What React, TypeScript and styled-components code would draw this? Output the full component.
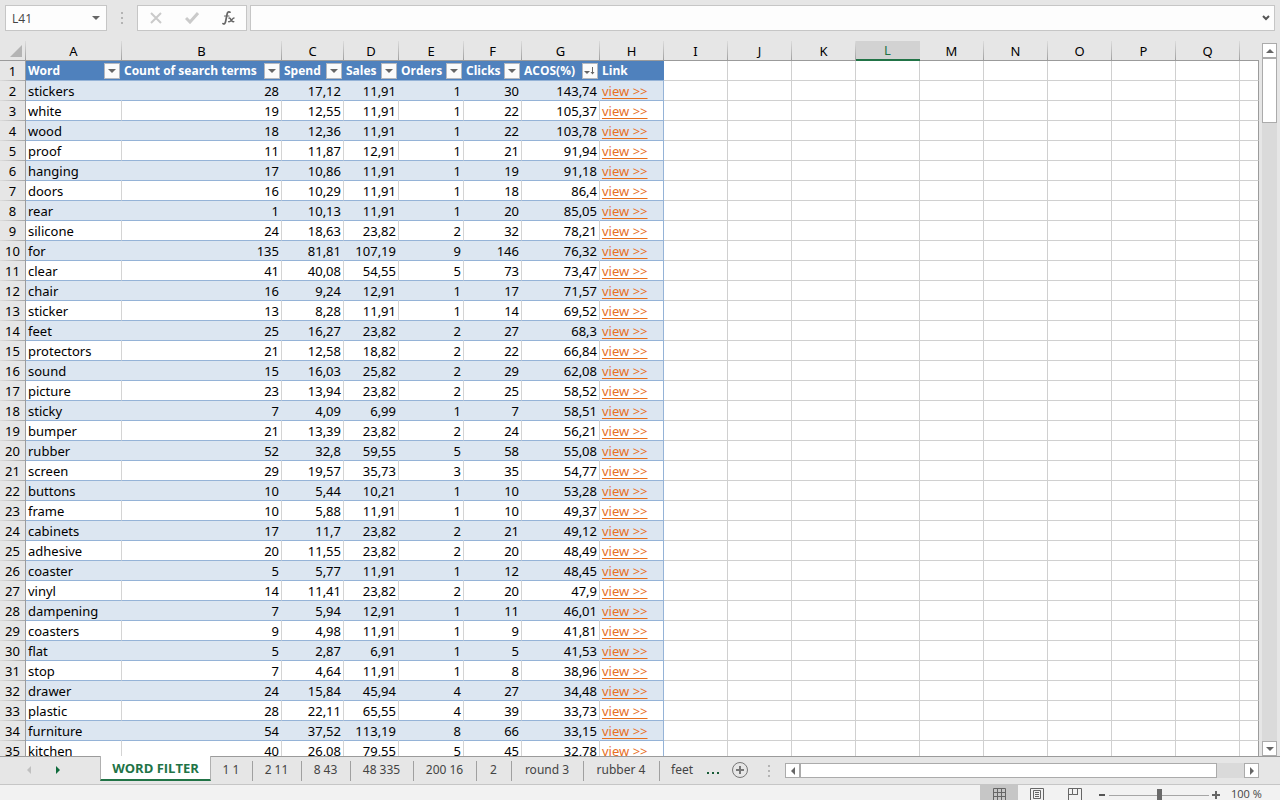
import React from "react";
import styled, { createGlobalStyle, css } from "styled-components";

const GlobalStyle = createGlobalStyle`
  *, *::before, *::after { box-sizing: border-box; }
  body { margin: 0; background: #e6e6e6; }
  button, input { font: inherit; color: inherit; }
`;

const uiFont = `"Open Sans", "Noto Sans", sans-serif`;
const green = "#217346";

const Workbook = styled.div`
  display: flex;
  flex-direction: column;
  height: 100vh;
  overflow: hidden;
  background: #e6e6e6;
  font-family: ${uiFont};
  font-size: 12px;
  color: #444;
`;

/* ---------- formula bar ---------- */

const FormulaBar = styled.header`
  display: flex;
  flex: none;
  height: 41px;
  padding: 5px 5px 10px;
`;

const Field = styled.div<{ $grow?: boolean }>`
  display: flex;
  align-items: center;
  border: 1px solid #c6c6c6;
  background: #fdfdfd;
  ${(p) => (p.$grow ? css`flex: 1; min-width: 0;` : css`flex: none; width: 102px;`)}
`;

const FieldInput = styled.input`
  flex: 1;
  min-width: 0;
  height: 22px;
  padding: 0 6px;
  border: 0;
  outline: 0;
  background: transparent;
`;

const PlainButton = styled.button<{ $w: number }>`
  display: flex;
  flex: none;
  align-items: center;
  justify-content: center;
  width: ${(p) => p.$w}px;
  height: 24px;
  padding: 0;
  border: 0;
  background: transparent;
`;

const GripBox = styled.div<{ $w: number }>`
  display: flex;
  flex: none;
  align-items: center;
  justify-content: center;
  width: ${(p) => p.$w}px;
`;

const Grip = ({ w }: { w: number }) => (
  <GripBox $w={w}>
    <svg width="2" height="12" fill="#b4b4b4">
      <rect width="2" height="2" />
      <rect y="5" width="2" height="2" />
      <rect y="10" width="2" height="2" />
    </svg>
  </GripBox>
);

const FormulaTools = styled.div`
  display: flex;
  flex: none;
  width: 110px;
  margin-right: 3px;
  border: 1px solid #c6c6c6;
  background: #fdfdfd;
`;

/* ---------- grid ---------- */

const Main = styled.main`
  display: flex;
  flex: 1;
  min-height: 0;
`;

const SheetPane = styled.div`
  flex: 1;
  min-width: 0;
  overflow: hidden;
`;

const SheetTable = styled.table`
  width: 100%;
  table-layout: fixed;
  border-collapse: separate;
  border-spacing: 0;
  font-family: "Noto Sans", sans-serif;
  font-size: 13px;
  line-height: 18px;
  color: #000;
`;

const Col = styled.col<{ $w?: number }>`
  width: ${(p) => (p.$w ? `${p.$w}px` : "auto")};
`;

const ColumnLetter = styled.th<{ $selected?: boolean; $last?: boolean }>`
  height: 20px;
  padding: 0 1px 0 0;
  font-weight: 400;
  border-bottom: 1px solid #9b9b9b;
  background: ${(p) =>
    p.$last ? "#e6e6e6" : "linear-gradient(#dcdcdc, #a0a0a0) right / 1px 100% no-repeat, #e6e6e6"};
  ${(p) =>
    p.$selected &&
    css`
      line-height: 17px;
      color: ${green};
      background: #d2d2d2;
      border-bottom: 2px solid ${green};
    `}
`;

const Corner = styled.td`
  height: 20px;
  padding: 0;
  border-bottom: 1px solid #9b9b9b;
  background: linear-gradient(#dcdcdc, #a0a0a0) right / 1px 100% no-repeat;
`;

const CornerMark = styled.svg`
  display: block;
  margin: 0 0 0 10px;
`;

const RowNumber = styled.th`
  height: 20px;
  padding: 0;
  font-weight: 400;
  text-align: center;
  border-right: 1px solid #9b9b9b;
  background: linear-gradient(90deg, #dcdcdc, #a8a8a8) bottom / 100% 1px no-repeat, #e6e6e6;
`;

const FieldHead = styled.th`
  height: 20px;
  padding: 0 0 0 2px;
  text-align: left;
  color: #fff;
  background: #4f81bd;
  border-bottom: 1px solid #95b3d7;
`;

const FieldHeadInner = styled.div`
  display: flex;
  align-items: center;
  justify-content: space-between;
  height: 19px;
  padding-right: 2px;
  font-family: ${uiFont};
  font-size: 12px;
  font-weight: 700;
  line-height: 20px;
  white-space: nowrap;
`;

const FilterButton = styled.button`
  display: flex;
  flex: none;
  align-items: center;
  justify-content: center;
  width: 16px;
  height: 16px;
  padding: 0;
  border: 1px solid #b4b8bf;
  background: #fbfbfb;
`;

const DataCell = styled.td<{ $banded: boolean; $num?: boolean; $end?: boolean }>`
  height: 20px;
  padding: 0 2px;
  white-space: nowrap;
  text-align: ${(p) => (p.$num ? "right" : "left")};
  background: ${(p) => (p.$banded ? "#dce6f1" : "#fff")};
  border-bottom: 1px solid #95b3d7;
  border-right: 1px solid ${(p) => (p.$end ? "#95b3d7" : p.$banded ? "#dce6f1" : "#d4d4d4")};
`;

const EmptyCell = styled.td<{ $last?: boolean }>`
  height: 20px;
  padding: 0;
  background: #fff;
  border-bottom: 1px solid #d0d0d0;
  border-right: 1px solid ${(p) => (p.$last ? "#9b9b9b" : "#d0d0d0")};
`;

const ViewLink = styled.a`
  color: #e8701f;
  text-decoration: underline;
  text-underline-offset: 2px;
`;

/* ---------- scroll bars ---------- */

const VScroll = styled.div`
  display: flex;
  flex: none;
  flex-direction: column;
  width: 21px;
  padding: 2px 3px 0;
`;

const ScrollButton = styled.button`
  display: flex;
  flex: none;
  align-items: center;
  justify-content: center;
  width: 15px;
  height: 15px;
  padding: 0;
  border: 1px solid #ababab;
  background: #fff;
`;

const Track = styled.div<{ $vertical?: boolean }>`
  flex: 1;
  min-width: 0;
  width: ${(p) => (p.$vertical ? "15px" : "auto")};
  height: ${(p) => (p.$vertical ? "auto" : "15px")};
  background: #dadada;
`;

const Thumb = styled.div<{ $vertical?: boolean }>`
  width: ${(p) => (p.$vertical ? "15px" : "94%")};
  height: ${(p) => (p.$vertical ? "65px" : "15px")};
  border: 1px solid #ababab;
  background: #fff;
`;

/* ---------- sheet tabs ---------- */

const TabBar = styled.nav`
  display: flex;
  flex: none;
  height: 28px;
  border-top: 1px solid #9b9b9b;
`;

const TabArrows = styled.div`
  display: flex;
  flex: none;
  width: 100px;
  padding-left: 15px;
`;

const Tab = styled.button<{ $w: number; $active?: boolean; $plain?: boolean }>`
  flex: none;
  width: ${(p) => p.$w}px;
  height: 26px;
  padding: 0 2px 0 0;
  border: 0;
  line-height: 26px;
  font-family: "Noto Sans", sans-serif;
  white-space: nowrap;
  background: ${(p) =>
    p.$plain ? "transparent" : "linear-gradient(#a0a0a0, #a0a0a0) right 4px / 1px 20px no-repeat"};
  ${(p) =>
    p.$active &&
    css`
      height: 25px;
      margin-top: -1px;
      padding: 2px 0 0;
      line-height: 21px;
      font-size: 13px;
      font-family: ${uiFont};
      font-weight: 700;
      color: ${green};
      background: #fff;
      border: 1px solid #b0b0b0;
      border-top: 0;
      border-bottom: 2px solid ${green};
    `}
`;

const TabSlot = styled.button<{ $w: number }>`
  display: flex;
  flex: none;
  align-items: center;
  justify-content: center;
  width: ${(p) => p.$w}px;
  height: 26px;
  padding: 0;
  border: 0;
  background: transparent;
`;

const HScroll = styled.div`
  display: flex;
  flex: 1;
  min-width: 0;
  padding: 6px 21px 0 8px;
`;

/* ---------- status bar ---------- */

const StatusBar = styled.footer`
  display: flex;
  flex: none;
  justify-content: flex-end;
  height: 16px;
  overflow: hidden;
  border-top: 1px solid #c6c6c6;
  background: #f2f2f2;
`;

const ViewButton = styled.button<{ $active?: boolean }>`
  display: flex;
  flex: none;
  justify-content: center;
  width: 38px;
  height: 22px;
  padding: 3px 0 0;
  border: 0;
  background: ${(p) => (p.$active ? "#c6c6c6" : "transparent")};
`;

const ZoomButton = styled.button<{ $w: number }>`
  display: flex;
  flex: none;
  align-items: center;
  justify-content: center;
  width: ${(p) => p.$w}px;
  height: 20px;
  padding: 0;
  border: 0;
  background: transparent;
`;

const ZoomSlider = styled.input`
  flex: none;
  width: 100px;
  height: 20px;
  margin: 0;
  appearance: none;
  background: linear-gradient(#a6a6a6, #a6a6a6) center / 100% 1px no-repeat;

  &::-webkit-slider-thumb {
    appearance: none;
    width: 5px;
    height: 12px;
    background: #6a6a6a;
  }
`;

const ZoomValue = styled.span`
  flex: none;
  width: 58px;
  padding-left: 9px;
  line-height: 18px;
  font-size: 11px;
  white-space: nowrap;
`;

/* ---------- data ---------- */

const fields: [string, "menu" | "sorted" | null][] = [
  ["Word", "menu"],
  ["Count of search terms", "menu"],
  ["Spend", "menu"],
  ["Sales", "menu"],
  ["Orders", "menu"],
  ["Clicks", "menu"],
  ["ACOS(%)", "sorted"],
  ["Link", null],
];

const widths = [96, 160, 62, 55, 65, 58, 78, 64, 64, 64, 64, 64, 64, 64, 64, 64, 64];
const letters = "ABCDEFGHIJKLMNOPQ".split("");

const rows = `stickers 28 17,12 11,91 1 30 143,74
white 19 12,55 11,91 1 22 105,37
wood 18 12,36 11,91 1 22 103,78
proof 11 11,87 12,91 1 21 91,94
hanging 17 10,86 11,91 1 19 91,18
doors 16 10,29 11,91 1 18 86,4
rear 1 10,13 11,91 1 20 85,05
silicone 24 18,63 23,82 2 32 78,21
for 135 81,81 107,19 9 146 76,32
clear 41 40,08 54,55 5 73 73,47
chair 16 9,24 12,91 1 17 71,57
sticker 13 8,28 11,91 1 14 69,52
feet 25 16,27 23,82 2 27 68,3
protectors 21 12,58 18,82 2 22 66,84
sound 15 16,03 25,82 2 29 62,08
picture 23 13,94 23,82 2 25 58,52
sticky 7 4,09 6,99 1 7 58,51
bumper 21 13,39 23,82 2 24 56,21
rubber 52 32,8 59,55 5 58 55,08
screen 29 19,57 35,73 3 35 54,77
buttons 10 5,44 10,21 1 10 53,28
frame 10 5,88 11,91 1 10 49,37
cabinets 17 11,7 23,82 2 21 49,12
adhesive 20 11,55 23,82 2 20 48,49
coaster 5 5,77 11,91 1 12 48,45
vinyl 14 11,41 23,82 2 20 47,9
dampening 7 5,94 12,91 1 11 46,01
coasters 9 4,98 11,91 1 9 41,81
flat 5 2,87 6,91 1 5 41,53
stop 7 4,64 11,91 1 8 38,96
drawer 24 15,84 45,94 4 27 34,48
plastic 28 22,11 65,55 4 39 33,73
furniture 54 37,52 113,19 8 66 33,15
kitchen 40 26,08 79,55 5 45 32,78`
  .split("\n")
  .map((line) => line.split(" "));

const tabs: [string, number][] = [
  ["1 1", 42],
  ["2 11", 49],
  ["8 43", 49],
  ["48 335", 63],
  ["200 16", 63],
  ["2", 35],
  ["round 3", 72],
  ["rubber 4", 76],
];

const Triangle = ({ dir, color = "#666" }: { dir: "up" | "down" | "left" | "right"; color?: string }) => {
  const shapes = {
    up: "M0 6L4 2L8 6Z",
    down: "M0 2H8L4 6Z",
    left: "M6 0V8L2 4Z",
    right: "M2 0V8L6 4Z",
  };
  return (
    <svg width="8" height="8" viewBox="0 0 8 8">
      <path d={shapes[dir]} fill={color} />
    </svg>
  );
};

const blanks = letters.slice(8);

const Blanks = () => (
  <>
    {blanks.map((l) => (
      <EmptyCell key={l} />
    ))}
    <EmptyCell $last />
  </>
);

export default function App() {
  return (
    <Workbook>
      <GlobalStyle />
      <FormulaBar>
        <Field>
          <FieldInput aria-label="Name box" defaultValue="L41" />
          <PlainButton $w={20} aria-label="Open name list">
            <Triangle dir="down" />
          </PlainButton>
        </Field>
        <Grip w={30} />
        <FormulaTools>
          <PlainButton $w={36} aria-label="Cancel">
            <svg width="12" height="12" viewBox="0 0 12 12" stroke="#cacaca" strokeWidth="2">
              <path d="M1 1L11 11M11 1L1 11" />
            </svg>
          </PlainButton>
          <PlainButton $w={36} aria-label="Enter">
            <svg width="14" height="12" viewBox="0 0 14 12" fill="none" stroke="#cacaca" strokeWidth="3">
              <path d="M1 6L5 10L13 1" />
            </svg>
          </PlainButton>
          <PlainButton $w={36} aria-label="Insert function">
            <svg width="13" height="14" viewBox="0 0 13 14" fill="none" stroke="#666" strokeLinecap="round">
              <path d="M8 1.2C6.300 .2 5.400 1.500 5 3.500L3.600 10.500C3.200 12.600 2.300 13.500 1 12.600" strokeWidth="1.700" />
              <path d="M2.500 5H7" strokeWidth="1.200" />
              <path d="M7 7.200C8.800 6 9 11.600 11.800 10.600M12 7C10.500 7 8.600 11.300 6.600 10.700" strokeWidth="1.400" />
            </svg>
          </PlainButton>
        </FormulaTools>
        <Field $grow>
          <FieldInput aria-label="Formula" defaultValue="" />
          <PlainButton $w={16} aria-label="Expand formula bar">
            <svg width="8" height="6" viewBox="0 0 8 6" fill="none" stroke="#555" strokeWidth="2">
              <path d="M1 1L4 4L7 1" />
            </svg>
          </PlainButton>
        </Field>
      </FormulaBar>

      <Main>
        <SheetPane>
          <SheetTable>
            <colgroup>
              <Col $w={26} />
              {widths.map((w, i) => (
                <Col key={i} $w={w} />
              ))}
              <Col />
            </colgroup>
            <thead>
              <tr>
                <Corner>
                  <CornerMark width="12" height="12" viewBox="0 0 12 12">
                    <path d="M12 0V12H0Z" fill="#b4b4b4" />
                  </CornerMark>
                </Corner>
                {letters.map((l) => (
                  <ColumnLetter key={l} scope="col" $selected={l === "L"}>
                    {l}
                  </ColumnLetter>
                ))}
                <ColumnLetter $last aria-label="R" />
              </tr>
            </thead>
            <tbody>
              <tr>
                <RowNumber scope="row">1</RowNumber>
                {fields.map(([name, filter]) => (
                  <FieldHead key={name}>
                    <FieldHeadInner>
                      {name}
                      {filter && (
                        <FilterButton aria-label={`Filter ${name}`}>
                          {filter === "menu" ? (
                            <Triangle dir="down" />
                          ) : (
                            <svg width="12" height="10" viewBox="0 0 12 10" fill="#666">
                              <path d="M0 5H6L3 8Z" />
                              <path d="M8 1H9V6H10.500L8.500 8.500L6.500 6H8Z" />
                            </svg>
                          )}
                        </FilterButton>
                      )}
                    </FieldHeadInner>
                  </FieldHead>
                ))}
                <Blanks />
              </tr>
              {rows.map((cells, i) => {
                const banded = i % 2 === 0;
                return (
                  <tr key={cells[0]}>
                    <RowNumber scope="row">{i + 2}</RowNumber>
                    {cells.map((value, c) => (
                      <DataCell key={c} $banded={banded} $num={c > 0}>
                        {value}
                      </DataCell>
                    ))}
                    <DataCell $banded={banded} $end>
                      <ViewLink href={`#${cells[0]}`}>view &gt;&gt;</ViewLink>
                    </DataCell>
                    <Blanks />
                  </tr>
                );
              })}
            </tbody>
          </SheetTable>
        </SheetPane>
        <VScroll>
          <ScrollButton aria-label="Scroll up">
            <Triangle dir="up" />
          </ScrollButton>
          <Track $vertical>
            <Thumb $vertical />
          </Track>
          <ScrollButton aria-label="Scroll down">
            <Triangle dir="down" />
          </ScrollButton>
        </VScroll>
      </Main>

      <TabBar aria-label="Sheets">
        <TabArrows>
          <TabSlot $w={28} aria-label="Previous sheets">
            <Triangle dir="left" color="#c0c0c0" />
          </TabSlot>
          <TabSlot $w={30} aria-label="Next sheets">
            <Triangle dir="right" color="#0f6b3c" />
          </TabSlot>
        </TabArrows>
        <Tab $w={111} $active>
          WORD FILTER
        </Tab>
        {tabs.map(([name, w]) => (
          <Tab key={name} $w={w}>
            {name}
          </Tab>
        ))}
        <Tab $w={46} $plain>
          feet
        </Tab>
        <TabSlot $w={14} aria-label="More sheets">
          <svg width="12" height="10" fill="#185c37">
            <rect y="7" width="2" height="2" />
            <rect x="5" y="7" width="2" height="2" />
            <rect x="10" y="7" width="2" height="2" />
          </svg>
        </TabSlot>
        <TabSlot $w={40} aria-label="New sheet">
          <svg width="16" height="16" viewBox="0 0 16 16" fill="none" stroke="#777">
            <circle cx="8" cy="8" r="7.500" />
            <path d="M8 4V12M4 8H12" strokeWidth="2" />
          </svg>
        </TabSlot>
        <Grip w={17} />
        <HScroll>
          <ScrollButton aria-label="Scroll left">
            <Triangle dir="left" />
          </ScrollButton>
          <Track>
            <Thumb />
          </Track>
          <ScrollButton aria-label="Scroll right">
            <Triangle dir="right" />
          </ScrollButton>
        </HScroll>
      </TabBar>

      <StatusBar>
        <ViewButton $active aria-label="Normal view">
          <svg width="13" height="13" fill="none" stroke="#666">
            <path d="M.5 .5H12.500V12.500H.5ZM4.500 0V13M8.500 0V13M0 4.500H13M0 8.500H13" />
          </svg>
        </ViewButton>
        <ViewButton aria-label="Page layout view">
          <svg width="14" height="13" fill="none" stroke="#666">
            <path d="M.5 .5H13.500V12.500H.5ZM3.500 2.500H10.500V10.500H3.500ZM5 4.500H9M5 6.500H9M5 8.500H9" />
          </svg>
        </ViewButton>
        <ViewButton aria-label="Page break view">
          <svg width="14" height="13" fill="none" stroke="#666">
            <path d="M.5 13V.5H13.500V12.500M4.500 0V6.500H.5M4.500 6.500H9.500M9.500 0V7" />
          </svg>
        </ViewButton>
        <ZoomButton $w={15} aria-label="Zoom out">
          <svg width="6" height="6" fill="#555">
            <rect y="2" width="6" height="2" />
          </svg>
        </ZoomButton>
        <ZoomSlider type="range" min={0} max={200} defaultValue={100} aria-label="Zoom" />
        <ZoomButton $w={13} aria-label="Zoom in">
          <svg width="8" height="8" fill="#666">
            <path d="M3 0H5V3H8V5H5V8H3V5H0V3H3Z" />
          </svg>
        </ZoomButton>
        <ZoomValue>100 %</ZoomValue>
      </StatusBar>
    </Workbook>
  );
}
